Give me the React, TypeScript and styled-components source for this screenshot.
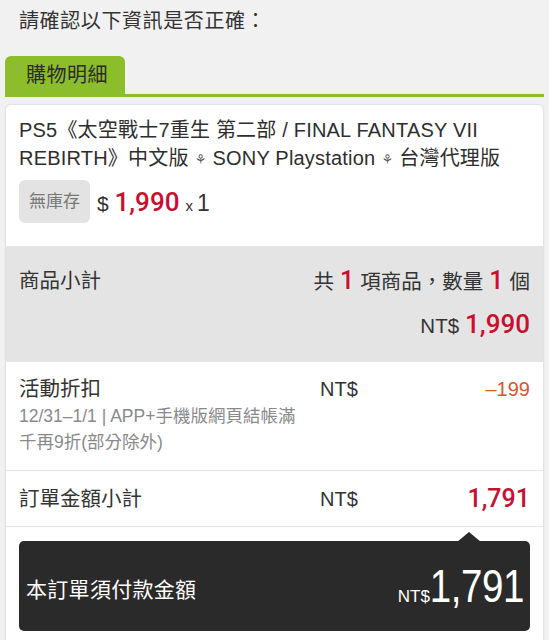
import React from "react";
import styled, { createGlobalStyle } from "styled-components";

const GlobalStyle = createGlobalStyle`
  html, body {
    margin: 0;
    padding: 0;
    background: #f1f1f1;
  }
  body {
    font-family: "Liberation Sans", "Noto Sans CJK TC", sans-serif;
    color: #333;
    -webkit-font-smoothing: antialiased;
  }
`;

const Page = styled.div`
  width: 549px;
  height: 640px;
  overflow: hidden;
  background: #f1f1f1;
`;

const Heading = styled.div`
  padding: 7px 0 0 19px;
  height: 49px;
  font-size: 20px;
  line-height: 28px;
  color: #333;
  letter-spacing: 0.6px;
`;

const TabBar = styled.div`
  margin: 0 5px;
  border-bottom: 3px solid #8cbd2a;
  display: flex;
`;

const Tab = styled.div`
  width: 120px;
  height: 38px;
  box-sizing: border-box;
  padding-left: 21px;
  background: #8cbd2a;
  border-radius: 6px 6px 0 0;
  font-size: 20px;
  line-height: 38px;
  color: #2b2b2b;
  letter-spacing: 0.5px;
`;

const Card = styled.div`
  margin: 7px 5px 0;
  background: #fff;
  border: 1px solid #e2e2e2;
  border-radius: 6px;
  box-shadow: 0 0 2px rgba(0, 0, 0, 0.06);
  overflow: hidden;
`;

const Product = styled.div`
  padding: 11px 13px 23px;
`;

const TitleLine = styled.div`
  font-size: 20px;
  line-height: 28px;
  color: #2e2e2e;
  letter-spacing: 0.2px;
  white-space: nowrap;
`;

const Sep = styled.span`
  display: inline-block;
  margin: 0 6px;
  font-family: "DejaVu Sans", sans-serif;
  font-size: 13px;
  line-height: 20px;
  vertical-align: 1px;
  color: #555;
`;

const PriceRow = styled.div`
  margin-top: 8px;
  display: flex;
  align-items: center;
  gap: 7px;
`;

const Badge = styled.div`
  width: 71px;
  height: 43px;
  border-radius: 6px;
  background: #e3e3e3;
  color: #777;
  font-size: 17px;
  line-height: 43px;
  text-align: center;
`;

const Price = styled.div`
  display: flex;
  align-items: baseline;
  font-size: 21px;
  color: #333;
`;

const Red = styled.span<{ $size?: number }>`
  color: #c8102e;
  font-family: Roboto, "Liberation Sans", sans-serif;
  font-weight: 500;
  font-size: ${(p) => p.$size ?? 25}px;
`;

const Small = styled.span<{ $size: number; $gap?: number }>`
  font-size: ${(p) => p.$size}px;
  margin-left: ${(p) => p.$gap ?? 0}px;
`;

const Subtotal = styled.div`
  background: #e4e4e4;
  padding: 22px 13px 0;
  height: 116px;
  box-sizing: border-box;
  display: flex;
  justify-content: space-between;
`;

const Label = styled.div`
  font-size: 20.5px;
  line-height: 26px;
  color: #333;
`;

const RightCol = styled.div`
  display: flex;
  flex-direction: column;
  align-items: flex-end;
  gap: 16px;
`;

const Summary = styled.div`
  font-size: 20.5px;
  line-height: 26px;
  color: #333;
  display: flex;
  align-items: baseline;
  gap: 6px;
`;

const Row = styled.div<{ $h: number; $top: number }>`
  display: grid;
  grid-template-columns: 301px 1fr auto;
  padding: ${(p) => p.$top}px 13px 0;
  height: ${(p) => p.$h}px;
  box-sizing: border-box;
  border-bottom: 1px solid #e6e6e6;
`;

const Note = styled.div`
  margin-top: 1px;
  font-size: 17.5px;
  line-height: 26px;
  color: #8a8a8a;
  white-space: nowrap;
`;

const Currency = styled.div`
  font-size: 20px;
  line-height: 26px;
  color: #333;
`;

const Discount = styled.div`
  font-size: 20px;
  line-height: 26px;
  color: #d9562a;
`;

const Amount = styled.div`
  line-height: 26px;
`;

const TotalWrap = styled.div`
  padding: 14px 13px 20px;
`;

const TotalBox = styled.div`
  position: relative;
  height: 90px;
  background: #2a2a2a;
  border-radius: 5px;
  display: flex;
  align-items: center;
  justify-content: space-between;
  padding: 4px 6px 0 7px;
  box-sizing: border-box;
  color: #fff;

  &::before {
    content: "";
    position: absolute;
    top: -9px;
    right: 49px;
    border-left: 12px solid transparent;
    border-right: 12px solid transparent;
    border-bottom: 10px solid #2a2a2a;
  }
`;

const TotalLabel = styled.div`
  font-size: 21px;
  letter-spacing: 0.3px;
`;

const TotalAmount = styled.div`
  display: flex;
  align-items: baseline;
  margin-top: -6px;
`;

const TotalCur = styled.span`
  font-size: 17px;
  margin-right: -21px;
`;

const TotalNum = styled.span`
  display: inline-block;
  font-size: 47px;
  letter-spacing: -0.5px;
  transform: scaleX(0.82);
  transform-origin: right center;
`;

export default function App() {
  return (
    <Page>
      <GlobalStyle />
      <Heading>請確認以下資訊是否正確：</Heading>
      <TabBar>
        <Tab>購物明細</Tab>
      </TabBar>
      <Card>
        <Product>
          <TitleLine>PS5《太空戰士7重生 第二部 / FINAL FANTASY VII</TitleLine>
          <TitleLine>
            REBIRTH》中文版<Sep>⚘</Sep>SONY Playstation<Sep>⚘</Sep>台灣代理版
          </TitleLine>
          <PriceRow>
            <Badge>無庫存</Badge>
            <Price>
              $&nbsp;<Red $size={26}>1,990</Red>
              <Small $size={15} $gap={6}>x</Small>
              <Small $size={23} $gap={4}>1</Small>
            </Price>
          </PriceRow>
        </Product>
        <Subtotal>
          <Label>商品小計</Label>
          <RightCol>
            <Summary>
              共 <Red $size={25}>1</Red> 項商品，數量 <Red $size={25}>1</Red> 個
            </Summary>
            <Summary>
              NT$ <Red $size={26}>1,990</Red>
            </Summary>
          </RightCol>
        </Subtotal>
        <Row $h={109} $top={14}>
          <div>
            <Label>活動折扣</Label>
            <Note>
              12/31–1/1 | APP+手機版網頁結帳滿
              <br />
              千再9折(部分除外)
            </Note>
          </div>
          <Currency>NT$</Currency>
          <Discount>–199</Discount>
        </Row>
        <Row $h={56} $top={15}>
          <Label>訂單金額小計</Label>
          <Currency>NT$</Currency>
          <Amount>
            <Red $size={25}>1,791</Red>
          </Amount>
        </Row>
        <TotalWrap>
          <TotalBox>
            <TotalLabel>本訂單須付款金額</TotalLabel>
            <TotalAmount>
              <TotalCur>NT$</TotalCur>
              <TotalNum>1,791</TotalNum>
            </TotalAmount>
          </TotalBox>
        </TotalWrap>
      </Card>
    </Page>
  );
}
